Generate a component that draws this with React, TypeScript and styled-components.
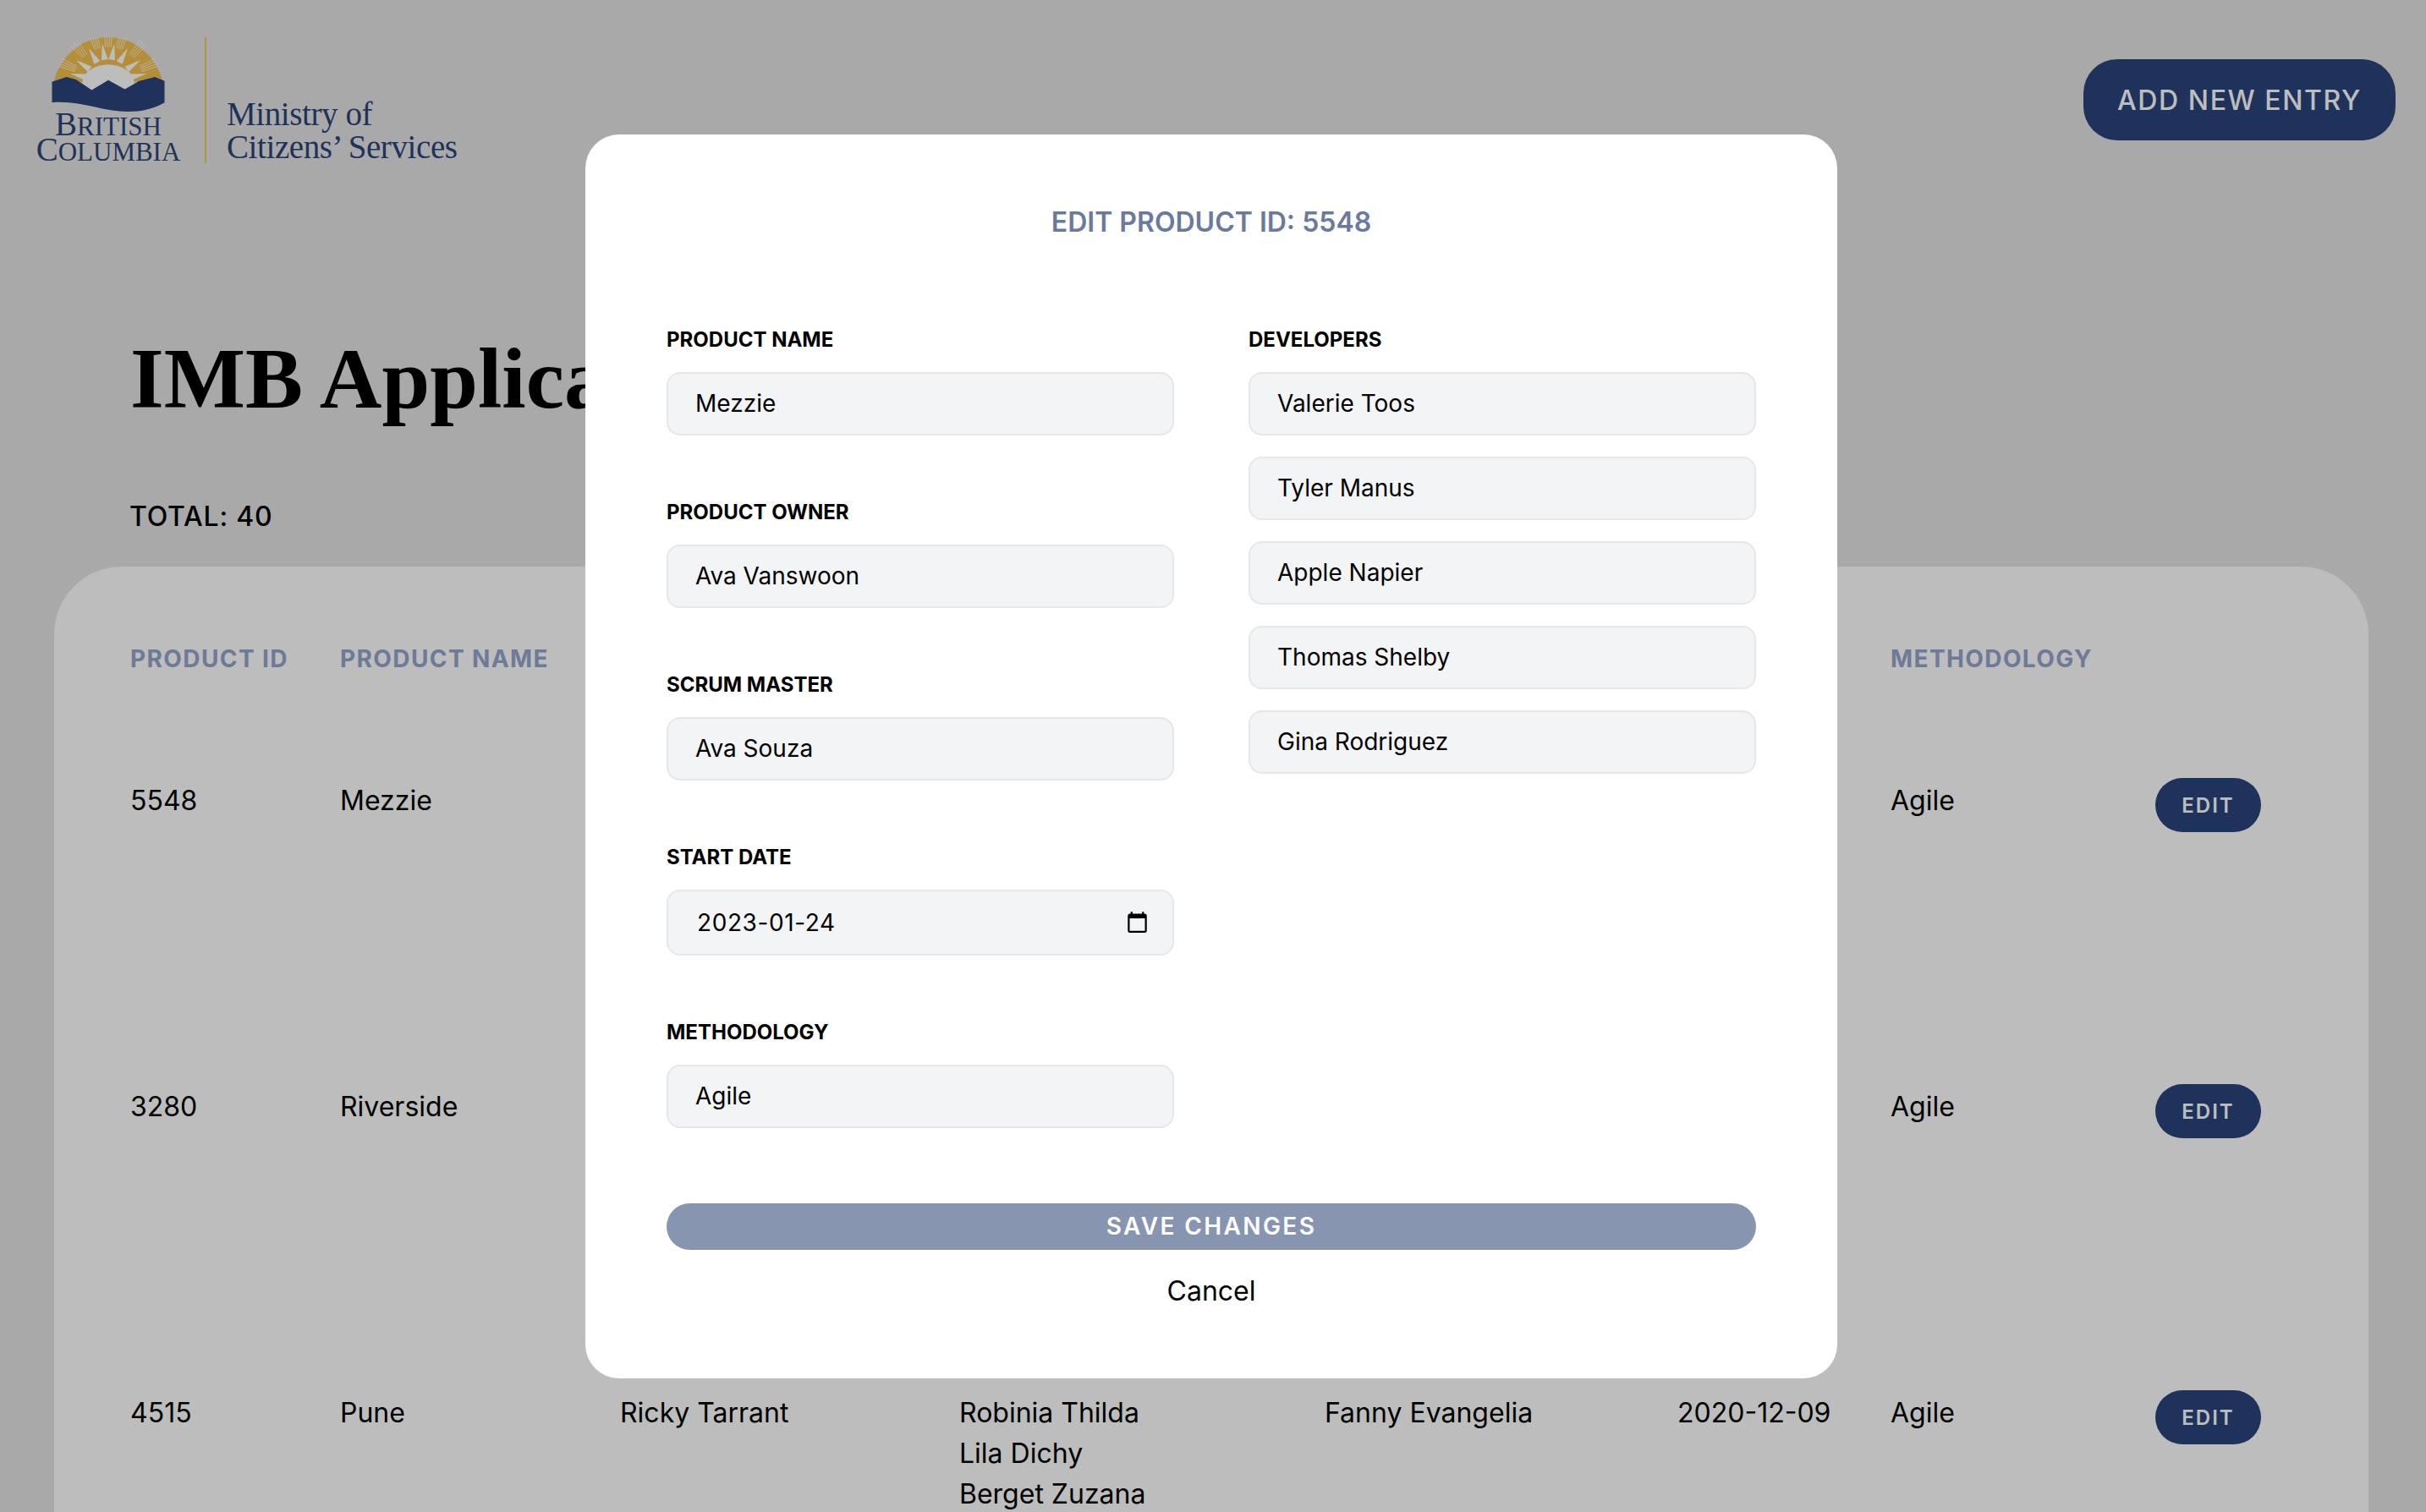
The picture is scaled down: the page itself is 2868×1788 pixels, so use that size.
import React from 'react';
import styled, { createGlobalStyle } from 'styled-components';

interface IProduct {
  id: string;
  name: string;
  owner: string;
  developers: string[];
  scrumMaster: string;
  startDate: string;
  methodology: string;
}

const products: IProduct[] = [
  {
    id: '5548',
    name: 'Mezzie',
    owner: 'Ava Vanswoon',
    developers: ['Valerie Toos', 'Tyler Manus', 'Apple Napier', 'Thomas Shelby', 'Gina Rodriguez'],
    scrumMaster: 'Ava Souza',
    startDate: '2023-01-24',
    methodology: 'Agile',
  },
  {
    id: '3280',
    name: 'Riverside',
    owner: '',
    developers: [],
    scrumMaster: '',
    startDate: '',
    methodology: 'Agile',
  },
  {
    id: '4515',
    name: 'Pune',
    owner: 'Ricky Tarrant',
    developers: ['Robinia Thilda', 'Lila Dichy', 'Berget Zuzana'],
    scrumMaster: 'Fanny Evangelia',
    startDate: '2020-12-09',
    methodology: 'Agile',
  },
];

const GlobalStyle = createGlobalStyle`
  html, body {
    margin: 0;
    height: 100%;
    overflow: hidden;
    background: #e4e4e4;
    font-family: Inter, "Liberation Sans", sans-serif;
    color: #000;
  }
  * {
    box-sizing: border-box;
  }
`;

const Page = styled.div`
  height: 100vh;
  overflow: hidden;
`;

const Header = styled.header`
  display: flex;
  justify-content: space-between;
  align-items: flex-start;
  padding: 44px 36px 0 41px;
`;

const Logo = styled.div`
  display: flex;
  height: 149px;
  color: #2b4478;
  font-family: "Liberation Serif", serif;
`;

const LogoMark = styled.div`
  display: flex;
  flex-direction: column;
  align-items: center;
  width: 174px;
`;

const LogoWord = styled.div<{ $top: number }>`
  font-size: 31px;
  line-height: 26px;
  margin-top: ${(p) => p.$top}px;
  white-space: nowrap;
  &::first-letter {
    font-size: 39px;
  }
`;

const LogoDivider = styled.div`
  width: 2px;
  height: 149px;
  margin: 0 24px 0 27px;
  background: #f4c45a;
`;

const Ministry = styled.div`
  align-self: flex-end;
  font-size: 39px;
  line-height: 39px;
  letter-spacing: -0.4px;
  padding-bottom: 0;
  white-space: nowrap;
`;

const AddButton = styled.button`
  width: 369px;
  height: 96px;
  margin-top: 26px;
  border: none;
  border-radius: 40px;
  background: #2a447c;
  color: #fff;
  font-family: inherit;
  font-size: 32px;
  font-weight: 500;
  letter-spacing: 1.6px;
`;

const Main = styled.main`
  padding: 0 68px 0 64px;
`;

const Title = styled.h1`
  margin: 199px 0 0 90px;
  font-family: "Liberation Serif", serif;
  font-size: 102px;
  line-height: 112px;
  font-weight: 700;
  white-space: nowrap;
`;

const Total = styled.div`
  margin: 83px 0 35px 89px;
  font-size: 32px;
  line-height: 48px;
  font-weight: 500;
  letter-spacing: 0.8px;
`;

const Panel = styled.section`
  padding: 89px 127px 0 90px;
  border-radius: 80px 80px 0 0;
  background: #fff;
`;

const Columns = styled.div`
  display: grid;
  grid-template-columns: 248px 331px 401px 432px 417px 252px 313px 125px;
`;

const HeadRow = styled(Columns)`
  margin-bottom: 63px;
`;

const HeadCell = styled.div`
  font-size: 28px;
  line-height: 40px;
  font-weight: 700;
  letter-spacing: 1.4px;
  color: #93a5ce;
  white-space: nowrap;
`;

const Row = styled(Columns)`
  min-height: 362px;
  padding: 61px 0;
`;

const Cell = styled.div`
  font-size: 32px;
  line-height: 48px;
  white-space: nowrap;
`;

const EditButton = styled.button`
  width: 125px;
  height: 64px;
  margin-top: -3px;
  border: none;
  border-radius: 32px;
  background: #2a447c;
  color: #fff;
  font-family: inherit;
  font-size: 24px;
  font-weight: 600;
  letter-spacing: 2px;
`;

const Overlay = styled.div`
  position: fixed;
  inset: 0;
  display: flex;
  align-items: center;
  justify-content: center;
  padding-right: 4px;
  background: rgba(0, 0, 0, 0.26);
`;

const Modal = styled.div`
  width: 1480px;
  padding: 82px 96px 81px;
  border-radius: 40px;
  background: #fff;
`;

const ModalTitle = styled.h2`
  margin: 0 0 101px;
  text-align: center;
  font-size: 32px;
  line-height: 44px;
  font-weight: 600;
  color: #6b7a9c;
`;

const FormGrid = styled.div`
  display: grid;
  grid-template-columns: 600px 600px;
  column-gap: 88px;
`;

const FormColumn = styled.div`
  display: flex;
  flex-direction: column;
`;

const Group = styled.div`
  margin-bottom: 75px;
  &:last-child {
    margin-bottom: 0;
  }
`;

const Label = styled.div`
  margin-bottom: 22px;
  font-size: 24px;
  line-height: 32px;
  font-weight: 700;
`;

const Field = styled.div<{ $date?: boolean }>`
  display: flex;
  align-items: center;
  justify-content: space-between;
  height: ${(p) => (p.$date ? 78 : 75)}px;
  padding: 0 ${(p) => (p.$date ? 28 : 32)}px 0 ${(p) => (p.$date ? 34 : 32)}px;
  border: 2px solid #e5e7eb;
  border-radius: 16px;
  background: #f3f4f6;
  font-size: 28px;
  letter-spacing: ${(p) => (p.$date ? 0.6 : 0)}px;
`;

const DeveloperList = styled.div`
  display: flex;
  flex-direction: column;
  gap: 25px;
`;

const SaveButton = styled.button`
  display: block;
  width: 100%;
  height: 55px;
  margin-top: 89px;
  border: none;
  border-radius: 28px;
  background: #8795b1;
  color: #fff;
  font-family: inherit;
  font-size: 28px;
  font-weight: 600;
  letter-spacing: 2.4px;
`;

const CancelButton = styled.button`
  display: block;
  width: 100%;
  height: 44px;
  margin-top: 27px;
  padding: 0;
  border: none;
  background: none;
  color: #000;
  font-family: inherit;
  font-size: 32px;
`;

const range = (from: number, step: number, count: number) =>
  Array.from({ length: count }, (_, i) => from + step * i);

const rayBundles = [-68, -42, -18, 0, 18, 42, 68];
const rayWedges = [-56, -30, -9, 9, 30, 56, -78, 78];

const SunLogo: React.FunctionComponent = () => (
  <svg width="136" height="91" viewBox="0 0 136 91">
    <path d="M2 54C11 20 38 0 68 0s57 20 66 54Z" fill="#f5c04f" />
    <g stroke="#fff" strokeWidth="0.9" opacity="0.85">
      {rayBundles.map((angle) =>
        range(-4.5, 3, 4).map((offset) => {
          const rad = ((angle + offset) * Math.PI) / 180;
          return (
            <line
              key={`${angle}${offset}`}
              x1={68 + Math.sin(rad) * 42}
              y1={54 - Math.cos(rad) * 42}
              x2={68 + Math.sin(rad) * 63}
              y2={54 - Math.cos(rad) * 63}
            />
          );
        })
      )}
    </g>
    {rayWedges.map((angle) => (
      <polygon
        key={angle}
        points="64,27 72,27 68,7"
        fill="#fff"
        transform={`rotate(${angle} 68 54)`}
      />
    ))}
    <ellipse cx="68" cy="55" rx="31" ry="22" fill="#fff" />
    <path
      d="M0 54 17.500 48 29 51 48 64 68 52 88 63 105.500 53 124.500 48 136 53 136 79C122 87 108 90 92 90 60 90 34 76 0 79Z"
      fill="#2a447c"
    />
  </svg>
);

const CalendarIcon: React.FunctionComponent = () => (
  <svg width="27" height="27" viewBox="0 0 24 24" fill="#000">
    <path d="M20 3h-1V1h-2v2H7V1H5v2H4c-1.100 0-2 .9-2 2v16c0 1.100.9 2 2 2h16c1.100 0 2-.9 2-2V5c0-1.100-.9-2-2-2zm0 18H4V8h16v13z" />
  </svg>
);

const App: React.FunctionComponent = () => {
  const current = products[0];
  return (
    <Page>
      <GlobalStyle />
      <Header>
        <Logo>
          <LogoMark>
            <SunLogo />
            <LogoWord $top={1}>BRITISH</LogoWord>
            <LogoWord $top={1}>COLUMBIA</LogoWord>
          </LogoMark>
          <LogoDivider />
          <Ministry>
            Ministry of
            <br />
            Citizens’ Services
          </Ministry>
        </Logo>
        <AddButton>ADD NEW ENTRY</AddButton>
      </Header>
      <Main>
        <Title>IMB Applications</Title>
        <Total>TOTAL: 40</Total>
        <Panel>
          <HeadRow>
            <HeadCell>PRODUCT ID</HeadCell>
            <HeadCell>PRODUCT NAME</HeadCell>
            <HeadCell>PRODUCT OWNER</HeadCell>
            <HeadCell>DEVELOPERS</HeadCell>
            <HeadCell>SCRUM MASTER</HeadCell>
            <HeadCell>START DATE</HeadCell>
            <HeadCell>METHODOLOGY</HeadCell>
          </HeadRow>
          {products.map((item) => (
            <Row key={item.id}>
              <Cell>{item.id}</Cell>
              <Cell>{item.name}</Cell>
              <Cell>{item.owner}</Cell>
              <Cell>
                {item.developers.map((name) => (
                  <div key={name}>{name}</div>
                ))}
              </Cell>
              <Cell>{item.scrumMaster}</Cell>
              <Cell>{item.startDate}</Cell>
              <Cell>{item.methodology}</Cell>
              <EditButton>EDIT</EditButton>
            </Row>
          ))}
        </Panel>
      </Main>
      <Overlay>
        <Modal>
          <ModalTitle>EDIT PRODUCT ID: {current.id}</ModalTitle>
          <FormGrid>
            <FormColumn>
              <Group>
                <Label>PRODUCT NAME</Label>
                <Field>{current.name}</Field>
              </Group>
              <Group>
                <Label>PRODUCT OWNER</Label>
                <Field>{current.owner}</Field>
              </Group>
              <Group>
                <Label>SCRUM MASTER</Label>
                <Field>{current.scrumMaster}</Field>
              </Group>
              <Group>
                <Label>START DATE</Label>
                <Field $date>
                  {current.startDate}
                  <CalendarIcon />
                </Field>
              </Group>
              <Group>
                <Label>METHODOLOGY</Label>
                <Field>{current.methodology}</Field>
              </Group>
            </FormColumn>
            <FormColumn>
              <Group>
                <Label>DEVELOPERS</Label>
                <DeveloperList>
                  {current.developers.map((name) => (
                    <Field key={name}>{name}</Field>
                  ))}
                </DeveloperList>
              </Group>
            </FormColumn>
          </FormGrid>
          <SaveButton>SAVE CHANGES</SaveButton>
          <CancelButton>Cancel</CancelButton>
        </Modal>
      </Overlay>
    </Page>
  );
};

export default App;
